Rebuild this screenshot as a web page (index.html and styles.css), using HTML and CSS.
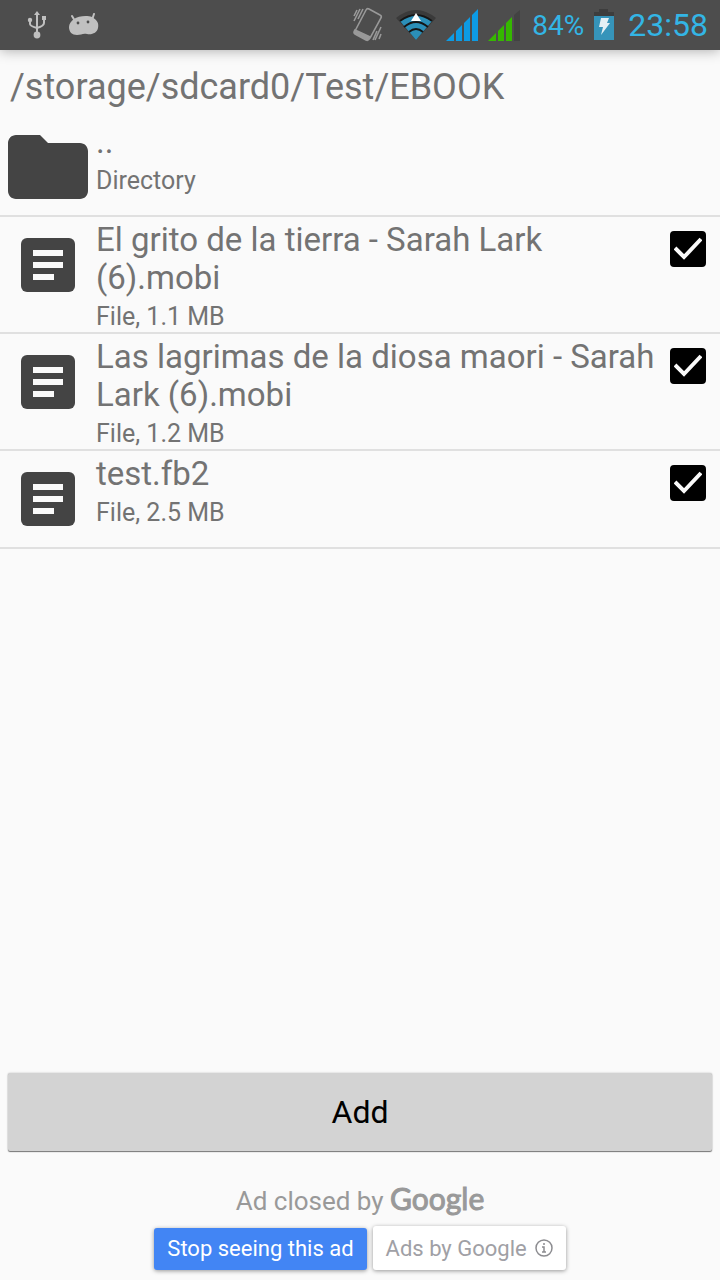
FILE: index.html
```html
<!DOCTYPE html>
<html lang="en">
  <head>
    <meta charset="UTF-8" />
    <meta name="viewport" content="width=device-width, initial-scale=1.0" />
    <title>Add Books</title>
    <link rel="stylesheet" href="styles.css">
  </head>
  <body>
    <!-- Status Bar -->
    <header class="status-bar">
      <div class="status-left">
        <svg width="20" height="28" viewBox="0 0 20 28" fill="none" stroke="#c0c0c0" stroke-width="2">
          <path d="M10 4v20M3 9v4q0 2 7 4M17 8v4q0 3-7 5" />
          <path d="M10 0l3 4H7z" fill="#c0c0c0" stroke="none" />
          <circle cx="3" cy="9" r="2.200" fill="#c0c0c0" stroke="none" />
          <path d="M15 5h4v4h-4z" fill="#c0c0c0" stroke="none" />
          <circle cx="10" cy="24" r="3.400" fill="#c0c0c0" stroke="none" />
        </svg>
        <svg width="30" height="24" viewBox="0 0 30 24">
          <path d="M3 3l3 5M25 1l-2 6" stroke="#c0c0c0" stroke-width="2" stroke-linecap="round" />
          <path d="M5 6C9 3 18 2 23 4c5 3 7 6 6 11-1 5-6 7-11 6-4-1-6 1-10 1-5 0-8-3-8-8 0-3 2-6 5-8z" fill="#c0c0c0" />
          <circle cx="9" cy="10" r="1.400" fill="#4d4d4d" />
          <circle cx="19" cy="9" r="1.400" fill="#4d4d4d" />
        </svg>
      </div>
      <div class="status-right">
        <svg width="30" height="36" viewBox="0 0 30 36" fill="none" stroke="#999" stroke-width="1.600">
          <path d="M13 3q1-2 3-1l11 6q2 1 1 3L17 31q-1 2-3 1L3 27q-2-1-1-3z" />
          <path d="M2 23l15 7-1 2q-1 2-3 1L2 27q-2-1 0-4z" fill="#999" />
          <path d="M7 2L1 14M4 3L1 9M10 2L5 12M28 20l-6 13M24 24l-4 9M28 27l-2 5" />
        </svg>
        <svg class="wifi" width="40" height="32" viewBox="0 0 40 32">
          <path d="M0 9Q20-7 40 9L20 31z" fill="#3a3a3a" />
          <path d="M4 12Q20 0 36 12L20 31z" fill="#2b8fb8" />
          <path d="M4 12Q20 0 36 12M8 18q12-10 24 0M13 23q7-6 14 0" fill="none" stroke="#151515" stroke-width="1.800" />
          <path d="M20 4l5 8H15z" fill="#fff" />
        </svg>
        <svg class="signal" width="32" height="32" viewBox="0 0 32 32" fill="#0d9be4">
          <path d="M0 32l8-8v8zM10 22l6-6v16h-6zM18 14l6-6v24h-6zM26 6l6-6v32h-6z" />
        </svg>
        <svg class="signal" width="32" height="31" viewBox="0 0 32 31" fill="#35b800">
          <path d="M0 31l8-8v8zM10 21l6-6v16h-6zM18 13l6-6v24h-6z" />
          <path d="M26 5l6-5v31h-6z" fill="#424242" />
        </svg>
        <span class="battery-level">84%</span>
        <svg class="battery" width="20" height="32" viewBox="0 0 20 32">
          <path d="M5 0h9v3h6v5H0V3h5z" fill="#3d3d3d" />
          <path d="M0 7h20v24H0z" fill="#3694ba" />
          <path d="M7 9h8l-2 5h3L7 26l2-8H5z" fill="#e4f0f5" />
        </svg>
        <time class="clock">23:58</time>
      </div>
    </header>

    <main>
      <h1 class="path">/storage/sdcard0/Test/EBOOK</h1>

      <!-- File List -->
      <ul class="file-list">
        <li class="file-row">
          <svg class="file-icon" viewBox="0 0 24 24">
            <path d="M10 4H4c-1.100 0-2 .9-2 2v12c0 1.100.9 2 2 2h16c1.100 0 2-.9 2-2V8c0-1.100-.9-2-2-2h-8z" />
          </svg>
          <div class="file-info">
            <p class="file-name">..</p>
            <p class="file-meta">Directory</p>
          </div>
        </li>
        <li class="file-row">
          <svg class="file-icon" viewBox="0 0 96 96">
            <rect x="21" y="21" width="54" height="54" rx="6" />
            <path d="M33 33h30v6H33zM33 45h30v6H33zM33 57h21v6H33z" fill="#fafafa" />
          </svg>
          <label class="file-info" for="file1">
            <span class="file-name">El grito de la tierra - Sarah Lark (6).mobi</span>
            <span class="file-meta">File, 1.1 MB</span>
          </label>
          <input class="file-check" type="checkbox" id="file1" checked />
        </li>
        <li class="file-row">
          <svg class="file-icon" viewBox="0 0 96 96">
            <rect x="21" y="21" width="54" height="54" rx="6" />
            <path d="M33 33h30v6H33zM33 45h30v6H33zM33 57h21v6H33z" fill="#fafafa" />
          </svg>
          <label class="file-info" for="file2">
            <span class="file-name">Las lagrimas de la diosa maori - Sarah Lark (6).mobi</span>
            <span class="file-meta">File, 1.2 MB</span>
          </label>
          <input class="file-check" type="checkbox" id="file2" checked />
        </li>
        <li class="file-row">
          <svg class="file-icon" viewBox="0 0 96 96">
            <rect x="21" y="21" width="54" height="54" rx="6" />
            <path d="M33 33h30v6H33zM33 45h30v6H33zM33 57h21v6H33z" fill="#fafafa" />
          </svg>
          <label class="file-info" for="file3">
            <span class="file-name">test.fb2</span>
            <span class="file-meta">File, 2.5 MB</span>
          </label>
          <input class="file-check" type="checkbox" id="file3" checked />
        </li>
      </ul>
    </main>

    <button class="add-button" type="button">Add</button>

    <!-- Ad Section -->
    <footer class="ad">
      <p class="ad-closed">Ad closed by <span class="ad-logo">Google</span></p>
      <div class="ad-actions">
        <button class="ad-button ad-stop" type="button">Stop seeing this ad</button>
        <button class="ad-button ad-about" type="button">
          Ads by Google
          <svg width="18" height="18" viewBox="0 0 18 18" fill="none" stroke="#8c8c90" stroke-width="1.500">
            <circle cx="9" cy="9" r="8" />
            <path d="M9 4v2M7 8h2v5M7 13h4" />
          </svg>
        </button>
      </div>
    </footer>
  </body>
</html>
```
FILE: styles.css
```css
/* General Styling */
* {
  box-sizing: border-box;
}

body {
  font-family: Roboto, "Noto Sans", sans-serif;
  margin: 0;
  min-height: 100vh;
  display: flex;
  flex-direction: column;
  background-color: #fafafa;
  color: #737373;
}

h1,
p,
ul {
  margin: 0;
  padding: 0;
}

button {
  font-family: inherit;
  border: none;
  cursor: pointer;
}

/* Status Bar */
.status-bar {
  display: flex;
  justify-content: space-between;
  height: 50px;
  padding: 0 12px 0 27px;
  background-color: #4d4d4d;
  color: #33b5e5;
  box-shadow: 0 1px 12px rgba(0, 0, 0, 0.3);
}

.status-left,
.status-right {
  display: flex;
  align-items: center;
}

.status-left {
  gap: 22px;
}

.wifi {
  margin-left: 13px;
}

.signal {
  margin-left: 10px;
}

.battery-level {
  margin-left: 12px;
  font-size: 28px;
}

.battery {
  margin-left: 10px;
}

.clock {
  margin-left: 14px;
  font-size: 32px;
}

/* File List */
main {
  flex: 1;
}

.path {
  padding: 15px 10px 10px;
  font-size: 36px;
  font-weight: normal;
  line-height: 44px;
}

.file-list {
  list-style: none;
}

.file-row {
  display: flex;
  align-items: flex-start;
  min-height: 98px;
  border-bottom: 2px solid #e0e0e0;
}

.file-icon {
  flex: none;
  width: 96px;
  height: 96px;
  fill: #444;
}

.file-info {
  flex: 1;
  padding-top: 4px;
}

.file-name,
.file-meta {
  display: block;
}

.file-name {
  font-size: 33px;
  line-height: 38px;
}

.file-meta {
  margin-top: 5px;
  font-size: 25px;
  line-height: 30px;
}

.file-check {
  appearance: none;
  flex: none;
  width: 36px;
  height: 36px;
  margin: 14px;
  border: 4px solid #000;
  border-radius: 4px;
}

.file-check:checked {
  background: #000 url("data:image/svg+xml,%3Csvg xmlns='http://www.w3.org/2000/svg' viewBox='0 0 36 36'%3E%3Cpath d='M5 17l9 9L31 8' fill='none' stroke='%23fafafa' stroke-width='4'/%3E%3C/svg%3E") center / 36px no-repeat;
}

/* Add Button */
.add-button {
  height: 78px;
  margin: 0 8px;
  background-color: #d3d3d3;
  color: #000;
  font-size: 32px;
  border-radius: 2px;
  box-shadow: 0 1px 1px #777, 0 0 2px #bbb;
}

/* Ad Section */
.ad {
  padding: 32px 0 10px;
  color: #999;
}

.ad-closed {
  font-size: 26px;
  line-height: 34px;
  text-align: center;
}

.ad-logo {
  font-family: Lato, sans-serif;
  font-size: 30px;
  line-height: 30px;
  -webkit-text-stroke: 1px #999;
}

.ad-actions {
  display: flex;
  justify-content: center;
  align-items: flex-end;
  gap: 6px;
  margin-top: 8px;
}

.ad-button {
  height: 44px;
  padding: 0 13px;
  font-size: 22px;
  border-radius: 3px;
  box-shadow: 0 1px 4px rgba(0, 0, 0, 0.4);
}

.ad-stop {
  height: 42px;
  padding-bottom: 2px;
  background-color: #4285f4;
  color: #fff;
}

.ad-about {
  display: flex;
  align-items: center;
  gap: 8px;
  background-color: #fff;
  color: #a0a0a5;
}
```
